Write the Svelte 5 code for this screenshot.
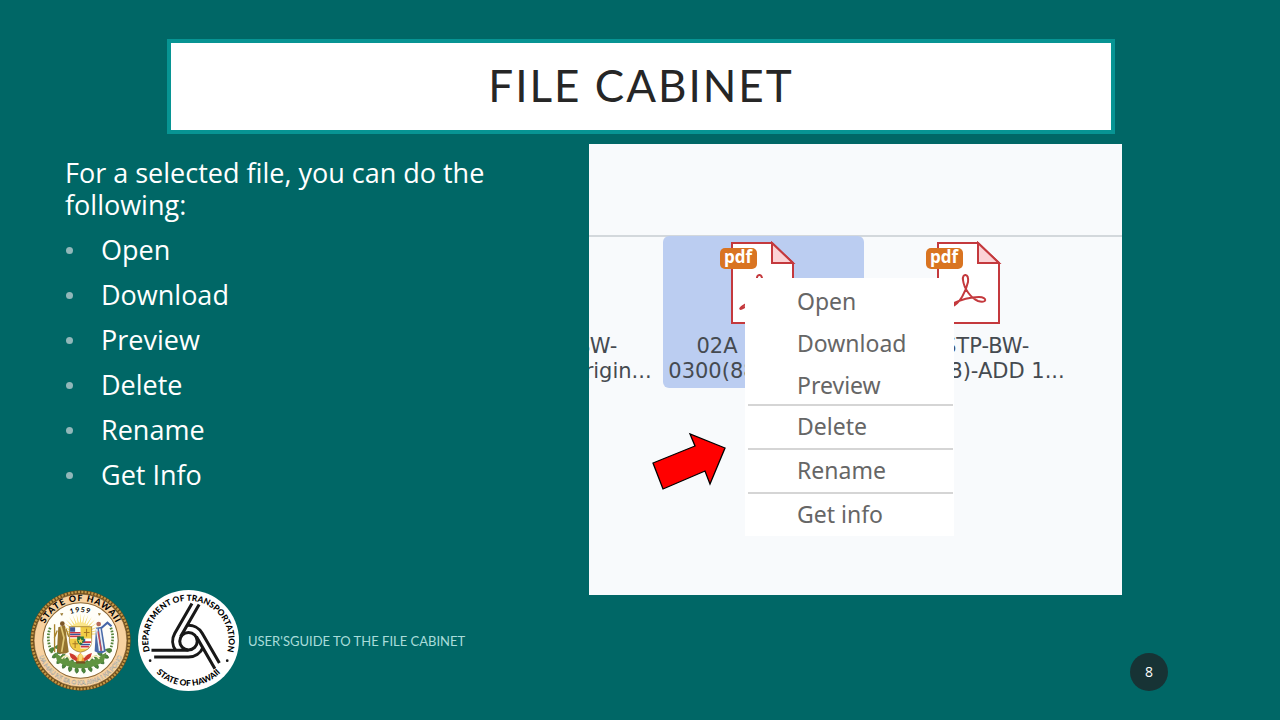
<script lang="ts">
  const actions = ['Open', 'Download', 'Preview', 'Delete', 'Rename', 'Get Info'];

  const menuItems = [
    { label: 'Open', divider: false },
    { label: 'Download', divider: false },
    { label: 'Preview', divider: false },
    { label: 'Delete', divider: true },
    { label: 'Rename', divider: true },
    { label: 'Get info', divider: true },
  ];

  const files = [
    { line1: '01 STP-BW-', line2: '0300(88)-Origin...', icon: false, selected: false },
    { line1: '02A STP-BW-', line2: '0300(88)-ADD 1...', icon: true, selected: true },
    { line1: '03 STP-BW-', line2: '0300(88)-ADD 1...', icon: true, selected: false },
  ];

  const arms = [0, 120, 240];
  const rays = Array.from({ length: 17 }, (_, i) => -88 + i * 11);
  const leaves = Array.from({ length: 12 }, (_, i) => 20 + i * 13);
</script>

<div class="slide">
  <header class="title-box">
    <h1>File Cabinet</h1>
  </header>

  <main class="content">
    <section class="notes">
      <p>For a selected file, you can do the following:</p>
      <ul>
        {#each actions as action}
          <li>{action}</li>
        {/each}
      </ul>
    </section>

    <section class="browser">
      <div class="browser-bar"></div>
      <div class="files">
        {#each files as file}
          <div class="file" class:selected={file.selected}>
            {#if file.icon}
              <svg class="file-icon" viewBox="0 0 84 84" aria-hidden="true">
                <path d="M12 2H52L73 22V82H12Z" fill="#fff" stroke="#c4393d" stroke-width="2" />
                <path d="M52 2V22H73Z" fill="#fbd3d6" stroke="#c4393d" stroke-width="2" />
                <path
                  d="M25 66C34 63 40 50 42 41C43 32 36 32 37 39C38 48 45 57 52 60C61 63 62 56 53 56C44 56 34 59 26 63C19 67 18 70 25 66Z"
                  fill="none" stroke="#c4393d" stroke-width="2"
                />
                <rect x="0" y="7" width="37" height="21" rx="5" fill="#d97421" />
                <text class="badge-text" x="18" y="22" text-anchor="middle">pdf</text>
              </svg>
            {/if}
            <span>{file.line1}</span>
            <span>{file.line2}</span>
          </div>
        {/each}
      </div>

      <div class="menu">
        {#each menuItems as item}
          <button class="menu-item" class:divider={item.divider}>{item.label}</button>
        {/each}
      </div>

      <svg class="arrow" viewBox="0 0 76 60" aria-hidden="true">
        <path d="M74 16L39 2L44 14L2 31L12 57L54 39L59 52Z" fill="#f00" stroke="#000" stroke-width="1.3" />
      </svg>
    </section>
  </main>

  <footer class="footer">
    <svg class="logo" viewBox="0 0 300 300" aria-label="State of Hawaii seal">
      <defs>
        <path id="seal-top" d="M33 150A117 117 0 0 1 267 150" />
        <path id="seal-year" d="M66 150A84 84 0 0 1 234 150" />
        <path id="seal-bottom" d="M18 150A132 132 0 0 0 282 150" />
      </defs>
      <circle cx="150" cy="150" r="149" fill="#6d4c1c" />
      <circle cx="150" cy="150" r="144" fill="none" stroke="#c49a48" stroke-width="7" stroke-dasharray="6 4" />
      <circle cx="150" cy="150" r="138" fill="#f8d2a0" stroke="#6d4c1c" stroke-width="2" />
      <circle cx="150" cy="150" r="112" fill="#fffef8" stroke="#8b6735" stroke-width="3" />
      <text class="seal-name"><textPath href="#seal-top" startOffset="50%" text-anchor="middle">STATE OF HAWAII</textPath></text>
      <text class="seal-year"><textPath href="#seal-year" startOffset="50%" text-anchor="middle">1959</textPath></text>
      <text class="seal-motto"><textPath href="#seal-bottom" startOffset="50%" text-anchor="middle">UA MAU KE EA O KA AINA I KA PONO</textPath></text>
      <path d="M89 70l10-2-4 9zM202 68l9 2-6 7z" fill="#9b7b35" />

      {#each rays as ray}
        <path d="M146 132L150 70L154 132Z" fill="#f6dc72" transform="rotate({ray} 150 132)" />
      {/each}
      <circle cx="150" cy="128" r="32" fill="#fbe58a" />

      {#each leaves as leaf}
        <g transform="rotate({leaf} 150 150)">
          <path d="M229 150q12-12 19-2q-9 11-19 2M229 153q-14 8-17-3q10-9 17 3" fill="#4f8a39" stroke="#2f632b" stroke-width="2" />
        </g>
      {/each}
      <path d="M60 112q-14 36 7 77M240 112q14 36-7 77" fill="none" stroke="#55843b" stroke-width="8" stroke-dasharray="5 4" />
      <path d="M73 185q77 60 154 0l-8 28q-67 39-138 0z" fill="#609441" />
      <path d="M94 204q15-18 24 1q17-20 31-1q16-18 30 1q13-18 27-1" fill="none" stroke="#f8eebc" stroke-width="5" />

      <!-- left figure -->
      <path d="M84 111L104 105L115 184Q97 195 80 184Z" fill="#94732e" />
      <path d="M92 108L101 142L94 184" fill="none" stroke="#e0c774" stroke-width="5" />
      <circle cx="96" cy="100" r="7" fill="#7c5726" />
      <path d="M73 102V184M81 120L72 143M107 115L115 139" stroke="#a9832c" stroke-width="4" />

      <!-- right figure -->
      <path d="M196 112L213 109L225 183Q209 194 192 182Z" fill="#496ba8" />
      <path d="M198 115L207 181M207 115L217 181" stroke="#e9edf4" stroke-width="5" />
      <path d="M202 123L212 181" stroke="#c84b56" stroke-width="4" />
      <circle cx="204" cy="101" r="7" fill="#b76a57" />
      <path d="M212 113L230 97L242 108" fill="none" stroke="#4566a8" stroke-width="6" />

      <!-- quartered shield -->
      <path d="M117 109H183V154Q181 179 150 185Q119 179 117 154Z" fill="#f2cd46" stroke="#8d6727" stroke-width="2" />
      <path d="M119 111H150V144H119ZM150 144H182V158Q179 168 171 174H150Z" fill="#fff" />
      <path d="M119 127H150M119 138H150M151 155H181M151 168H175" stroke="#ce3540" stroke-width="5" />
      <path d="M119 132H150M151 162H178" stroke="#35599c" stroke-width="4" />
      <path d="M119 111H134V124H119ZM151 145H164V155H151Z" fill="#405796" />
      <path d="M168 115V138M160 126H177M134 151V172M126 160H143" stroke="#a77824" stroke-width="3" />
      <path d="M140 138H160V151Q158 160 150 164Q142 160 140 151Z" fill="#26773c" />
      <path d="M150 143l3 6 6 1-5 3 2 6-6-4-5 4 1-6-5-3 6-1z" fill="#f2d655" />

      <!-- phoenix -->
      <path d="M150 213Q119 211 117 187Q133 190 141 203L150 194L160 203Q169 190 184 187Q181 211 150 213Z" fill="#cc3a2e" />
      <path d="M138 216q2-25 12-29q10 8 12 29z" fill="#f09a31" />
      <path d="M144 196q8-13 13 0l-5 17h-7z" fill="#f7dc73" />
      <path d="M137 215H164" stroke="#775320" stroke-width="7" />
    </svg>

    <svg class="logo" viewBox="0 0 300 300" aria-label="Department of Transportation logo">
      <defs>
        <path id="dot-top" d="M48 212A119 119 0 1 1 252 212" />
        <path id="dot-bottom" d="M15 150A135 135 0 0 0 285 150" />
      </defs>
      <circle cx="150" cy="150" r="150" fill="#fff" />
      <g fill="none" stroke="#181818" stroke-width="9">
        <circle cx="150" cy="152" r="26" />
        {#each arms as arm}
          <path d="M40 179H150M48 199H150A47 47 0 0 0 193 171" transform="rotate({arm} 150 152)" />
        {/each}
      </g>
      <text class="dot-name"><textPath href="#dot-top" startOffset="50%" text-anchor="middle">DEPARTMENT OF TRANSPORTATION</textPath></text>
      <text class="dot-name"><textPath href="#dot-bottom" startOffset="50%" text-anchor="middle">STATE OF HAWAII</textPath></text>
      <circle cx="36" cy="210" r="4" fill="#181818" />
      <circle cx="265" cy="210" r="4" fill="#181818" />
    </svg>

    <span class="footer-text">USER'SGUIDE TO THE FILE CABINET</span>
    <span class="page-number">8</span>
  </footer>
</div>

<style>
  :global(body) {
    background: #006766;
  }

  .slide {
    display: flex;
    flex-direction: column;
    min-height: 100vh;
    box-sizing: border-box;
    padding-top: 39px;
    background: #006766;
    color: #fff;
    font-family: 'Open Sans', sans-serif;
  }

  .title-box {
    margin: 0 165px 0 167px;
    padding-bottom: 3px;
    border: 4px solid #079493;
    background: #fff;
    text-align: center;
  }

  h1 {
    margin: 0;
    color: #262626;
    font-family: Lato, sans-serif;
    font-size: 44px;
    font-weight: 400;
    line-height: 84px;
    letter-spacing: 2px;
    text-transform: uppercase;
  }

  .content {
    display: grid;
    grid-template-columns: 524fr 533fr;
    padding: 10px 158px 0 65px;
  }

  .notes {
    padding: 13px 90px 0 0;
    font-size: 27px;
    line-height: 32px;
  }

  .notes p {
    margin: 0;
  }

  .notes ul {
    margin: 0;
    padding: 0;
    list-style: none;
  }

  .notes li {
    display: flex;
    align-items: center;
    margin-top: 13px;
  }

  .notes li::before {
    content: '';
    width: 7px;
    height: 7px;
    margin: 0 28px 0 1px;
    border-radius: 50%;
    background: #91b7b9;
  }

  .browser {
    position: relative;
    min-height: 451px;
    overflow: hidden;
    background: #f8fafc;
    font-family: 'Noto Sans', sans-serif;
  }

  .browser-bar {
    height: 91px;
    border-bottom: 2px solid #d3d8dc;
  }

  .files {
    display: flex;
    gap: 5px;
    margin: -1px 0 0 -132px;
  }

  .file {
    display: flex;
    flex: 0 0 201px;
    flex-direction: column;
    align-items: center;
    justify-content: flex-end;
    box-sizing: border-box;
    height: 152px;
    padding-bottom: 4px;
    border-radius: 6px;
    color: #454a50;
    font-family: 'DejaVu Sans', sans-serif;
    font-size: 21px;
    line-height: 25px;
    white-space: nowrap;
  }

  .file.selected {
    background: #bbcdf1;
  }

  .file-icon {
    width: 84px;
    height: 84px;
    margin: 0 3px 9px 0;
  }

  .badge-text {
    fill: #fff;
    font-family: 'Open Sans', sans-serif;
    font-size: 17px;
    font-weight: 700;
  }

  .menu {
    position: absolute;
    top: 134px;
    left: 156px;
    display: flex;
    flex-direction: column;
    width: 209px;
    box-sizing: border-box;
    padding: 0 1px 0 3px;
    background: #fff;
  }

  .menu-item {
    height: 42px;
    padding: 3px 0 0 49px;
    border: 0;
    background: none;
    color: #666;
    font-family: inherit;
    font-size: 23px;
    line-height: 38px;
    text-align: left;
  }

  .menu-item.divider {
    height: 44px;
    padding: 0 0 3px 49px;
    border-top: 2px solid #d5d5d5;
  }

  .arrow {
    position: absolute;
    top: 288px;
    left: 62px;
    width: 76px;
    height: 60px;
  }

  .footer {
    display: flex;
    align-items: center;
    margin-top: -5px;
    padding: 0 112px 0 30px;
  }

  .logo {
    width: 101px;
    height: 101px;
    margin-right: 7px;
  }

  .logo text {
    font-family: Lato, sans-serif;
    font-weight: 700;
  }

  .logo .seal-name {
    font-size: 26px;
    font-weight: 900;
    letter-spacing: 3px;
  }

  .seal-year {
    font-size: 21px;
    letter-spacing: 3px;
  }

  .seal-motto {
    fill: #fff4df;
    stroke: #8e8c86;
    stroke-width: 1px;
    font-size: 18px;
  }

  .logo .dot-name {
    font-size: 25px;
    font-weight: 900;
  }

  .footer-text {
    margin-left: 2px;
    color: #a9dcda;
    font-family: Lato, sans-serif;
    font-size: 13px;
    line-height: 20px;
  }

  .page-number {
    align-self: flex-end;
    width: 38px;
    margin-left: auto;
    border-radius: 50%;
    background: #173335;
    font-size: 14px;
    line-height: 38px;
    text-align: center;
  }
</style>
